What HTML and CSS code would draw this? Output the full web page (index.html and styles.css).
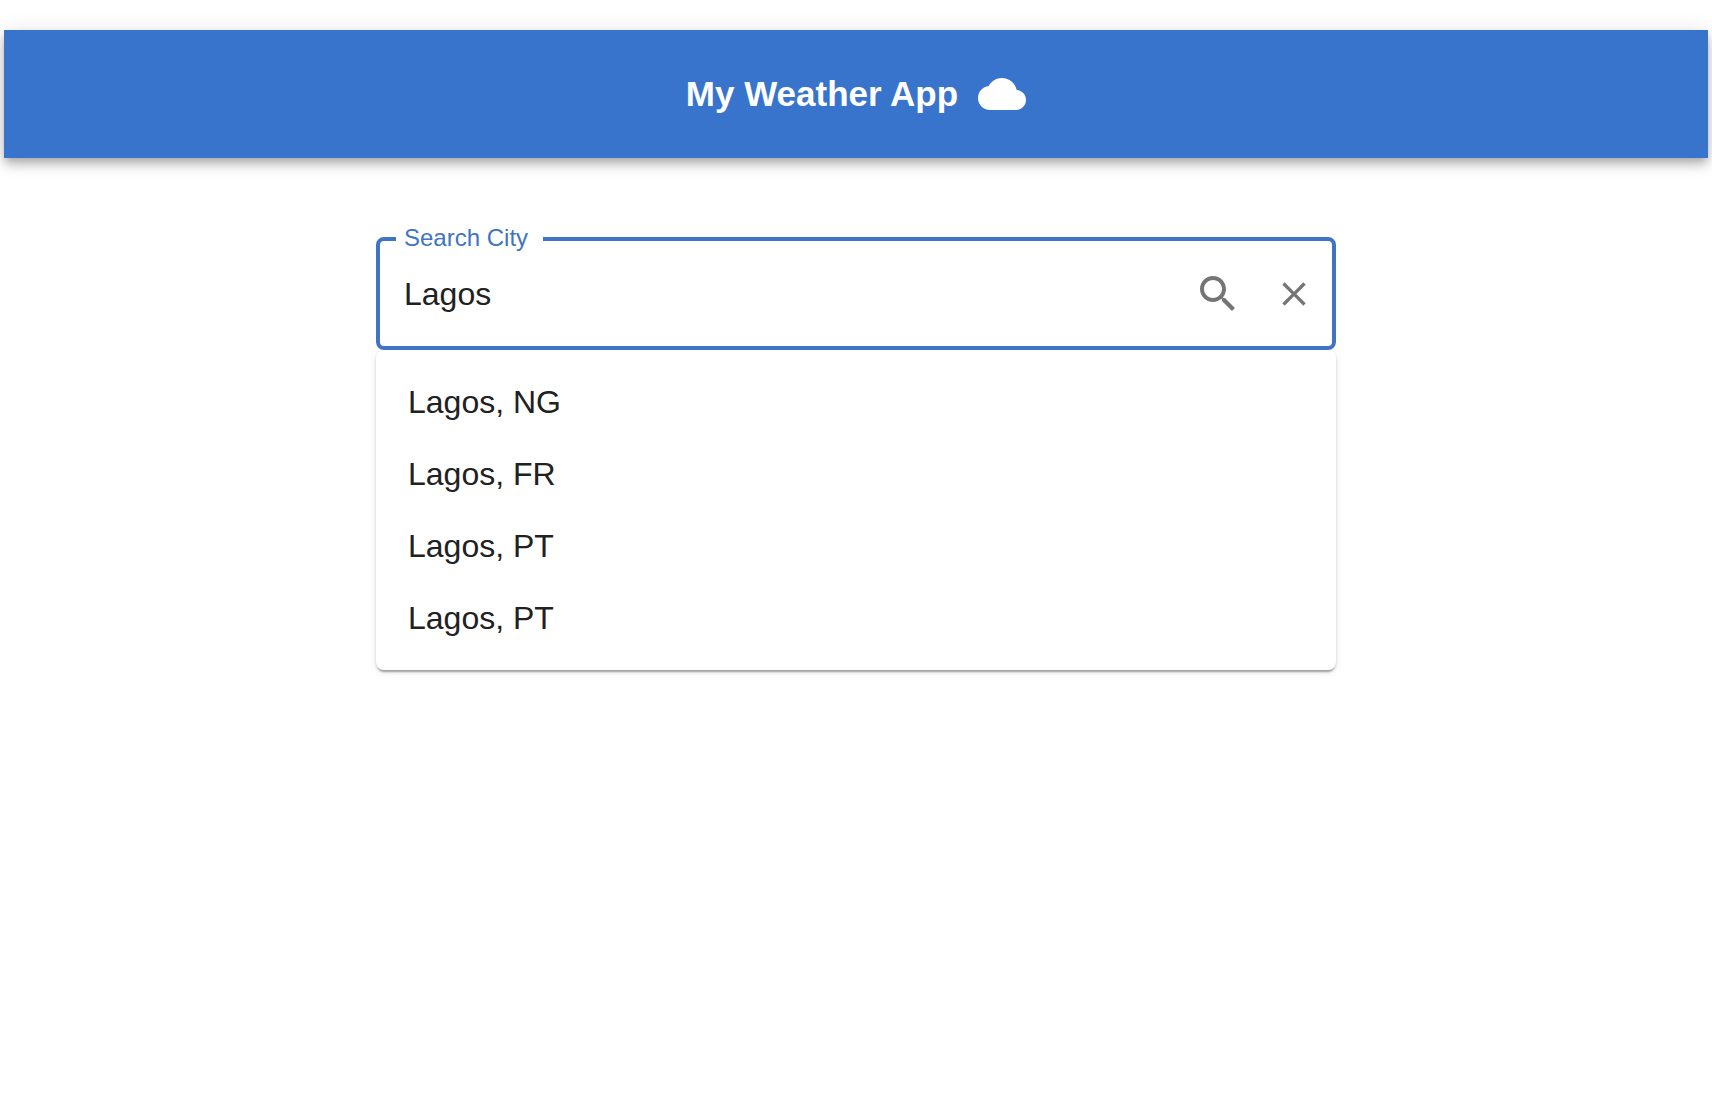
FILE: index.html
```html
<!DOCTYPE html>
<html lang="en">
<head>
  <meta charset="utf-8">
  <meta name="viewport" content="width=device-width, initial-scale=1">
  <title>My Weather App</title>
  <link rel="stylesheet" href="styles.css">
</head>
<body>
  <header class="app-bar">
    <h1 class="app-title">My Weather App</h1>
    <svg class="icon-large" viewBox="0 0 24 24" aria-hidden="true"><path d="M19.35 10.04C18.67 6.59 15.64 4 12 4 9.11 4 6.6 5.64 5.35 8.04 2.34 8.36 0 10.91 0 14c0 3.31 2.69 6 6 6h13c2.76 0 5-2.24 5-5 0-2.64-2.05-4.78-4.65-4.96z"/></svg>
  </header>
  <main class="search">
    <div class="field">
      <label class="field-label" for="city">Search City</label>
      <input class="field-input" id="city" type="text" value="Lagos" autocomplete="off">
      <button class="icon-button" type="button" aria-label="Search">
        <svg class="icon-large" viewBox="0 0 24 24" aria-hidden="true"><path d="M15.5 14h-.79l-.28-.27C15.41 12.59 16 11.11 16 9.5 16 5.91 13.09 3 9.5 3S3 5.91 3 9.5 5.91 16 9.5 16c1.61 0 3.09-.59 4.23-1.57l.27.28v.79l5 4.99L20.49 19l-4.99-5zm-6 0C7.01 14 5 11.99 5 9.5S7.01 5 9.5 5 14 7.01 14 9.5 11.99 14 9.5 14z"/></svg>
      </button>
      <button class="icon-button" type="button" aria-label="Clear">
        <svg class="icon-small" viewBox="0 0 24 24" aria-hidden="true"><path d="M19 6.41L17.59 5 12 10.59 6.41 5 5 6.41 10.59 12 5 17.59 6.41 19 12 13.41 17.59 19 19 17.59 13.41 12z"/></svg>
      </button>
    </div>
    <ul class="options" role="listbox" aria-label="Cities">
      <li class="option" role="option">Lagos, NG</li>
      <li class="option" role="option">Lagos, FR</li>
      <li class="option" role="option">Lagos, PT</li>
      <li class="option" role="option">Lagos, PT</li>
    </ul>
  </main>
</body>
</html>
```

FILE: styles.css
```css
* {
  box-sizing: border-box;
}

body {
  margin: 0;
  padding: 30px 4px;
  background: #fff;
  color: #212121;
  font: 32px/48px "Liberation Sans", Arial, sans-serif;
}

.app-bar {
  display: flex;
  align-items: center;
  justify-content: center;
  gap: 20px;
  min-height: 128px;
  background: #3874cb;
  color: #fff;
  box-shadow: 0 4px 8px -2px rgba(0, 0, 0, 0.2),
    0 8px 10px rgba(0, 0, 0, 0.14),
    0 2px 20px rgba(0, 0, 0, 0.12);
}

.app-title {
  margin: 0;
  font-size: 35px;
  font-weight: 700;
}

.icon-large {
  display: block;
  width: 48px;
  height: 48px;
  fill: currentColor;
}

.icon-small {
  display: block;
  width: 40px;
  height: 40px;
  fill: currentColor;
}

.search {
  width: 100%;
  max-width: 960px;
  margin: 79px auto 0;
}

.field {
  position: relative;
  display: flex;
  align-items: center;
  gap: 20px;
  padding: 29px 10px 28px 24px;
  border: 4px solid #3f74c4;
  border-radius: 8px;
}

/* The label sits in a notch of the field's top border. */
.field-label {
  position: absolute;
  top: -19px;
  left: 16px;
  padding: 0 15px 0 8px;
  background: #fff;
  color: #3f74c4;
  font-size: 24px;
  line-height: 32px;
}

.field-input {
  flex: 1;
  min-width: 0;
  height: 48px;
  padding: 0;
  border: 0;
  outline: 0;
  background: transparent;
  color: inherit;
  font: inherit;
}

.icon-button {
  display: flex;
  align-items: center;
  justify-content: center;
  width: 56px;
  height: 48px;
  padding: 0;
  border: 0;
  background: transparent;
  color: #757575;
  cursor: pointer;
}

.options {
  margin: 0;
  padding: 16px 0;
  list-style: none;
  background: #fff;
  border-radius: 8px;
  box-shadow: 0 4px 2px -2px rgba(0, 0, 0, 0.2),
    0 2px 2px rgba(0, 0, 0, 0.14),
    0 2px 6px rgba(0, 0, 0, 0.12);
}

.option {
  padding: 12px 32px;
  cursor: pointer;
}
```
